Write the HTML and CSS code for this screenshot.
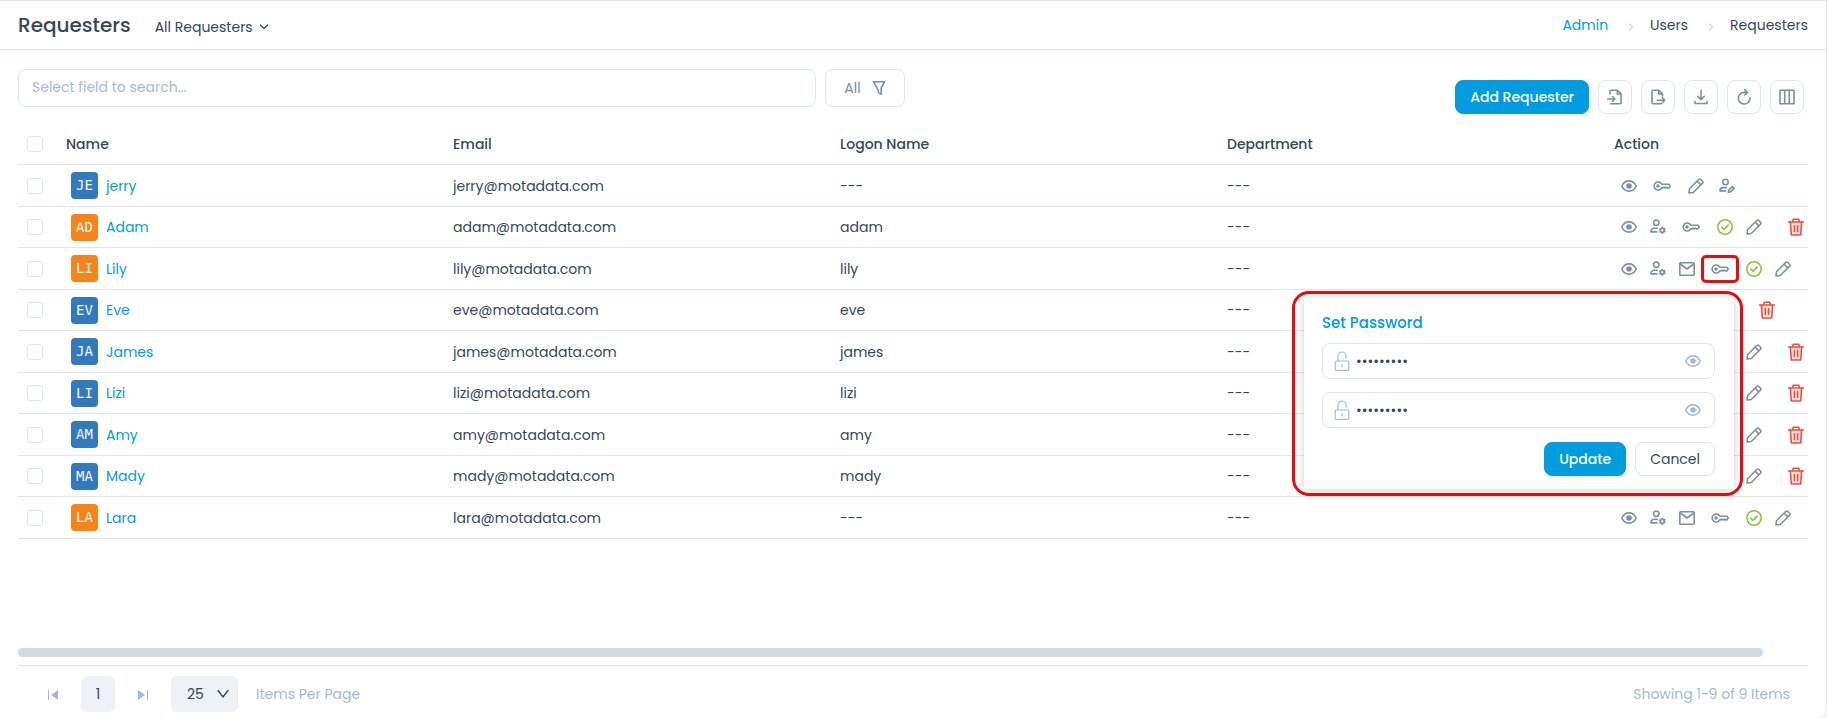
FILE: index.html
```html
<!DOCTYPE html>
<html lang="en">
<head>
    <meta charset="UTF-8">
    <meta name="viewport" content="width=device-width, initial-scale=1.0">
    <title>Requesters</title>
    <link rel="stylesheet" href="styles.css">
</head>
<body>

    <!-- icon sprite -->
    <svg class="sprite" aria-hidden="true">
        <symbol id="i-eye" viewBox="0 0 16 16"><path d="M.8 8C2.300 4.700 5 2.900 8 2.900s5.700 1.800 7.200 5.100c-1.500 3.300-4.200 5.100-7.200 5.100S2.300 11.300.8 8z"/><circle cx="8" cy="8" r="2" fill="currentColor"/></symbol>
        <symbol id="i-key" viewBox="0 0 18 16"><path d="M8.700 6.200A4 4 0 1 0 8.700 9.900H10l1-.8 1.300.9 1.300-.9 1.300.9h.9L17.200 8l-1.300-1.800z"/><circle cx="5" cy="8" r="1" fill="currentColor"/></symbol>
        <symbol id="i-pencil" viewBox="0 0 16 16"><path d="M1 15l.5-4.300L10.700 1.500a1.500 1.500 0 0 1 2.100 0l1.700 1.700a1.500 1.500 0 0 1 0 2.100L5.300 14.500zM9.200 3.200l3.700 3.700"/></symbol>
        <symbol id="i-user-edit" viewBox="0 0 16 16"><circle cx="6.500" cy="4" r="2.700"/><path d="M7.500 9.600H4.200A3.300 3.300 0 0 0 1 12.900h5.500M9.300 14.300l.4-2.200 3.500-3.500 1.800 1.800-3.500 3.500z"/></symbol>
        <symbol id="i-user-cog" viewBox="0 0 16 16"><circle cx="6.300" cy="3.700" r="2.700"/><path d="M7.300 9.300H4A3.200 3.200 0 0 0 .9 12.900h6M12.200 8.400l.9 1.300 1.600-.1-.7 1.500.9 1.400-1.600.2-.8 1.500-1-1.300-1.600.1.700-1.500-.9-1.400 1.600-.2z"/></symbol>
        <symbol id="i-mail" viewBox="0 0 16 16"><rect x=".8" y="1.800" width="14.400" height="12.400" rx=".8"/><path d="M1.200 3l6.800 5 6.800-5"/></symbol>
        <symbol id="i-check" viewBox="0 0 16 16"><circle cx="8" cy="8" r="7.200"/><path d="M4.700 8.200l2.300 2.200 4.200-4.300"/></symbol>
        <symbol id="i-trash" viewBox="0 0 16 18"><path fill="#fde3e0" d="M2.400 4l.9 13h9.400l.9-13"/><path d="M.7 4h14.600M4.700 4l.5-2.800h5.600l.5 2.800M6.400 7.500v6M9.600 7.500v6"/></symbol>
        <symbol id="i-filter" viewBox="0 0 14 16"><path d="M1.400 1.700h11.200L9.200 8v6.300L6.400 12.500V11L5 8z"/></symbol>
        <symbol id="i-import" viewBox="0 0 16 16"><path d="M3 5V2.200a1 1 0 0 1 1-1h6.500L14 4.700v9a1 1 0 0 1-1 1H3.500M10.300 1.500V5H14M.8 10h7M5.500 7.500L8 10l-2.500 2.500"/></symbol>
        <symbol id="i-export" viewBox="0 0 16 16"><path d="M11.500 14.700H3a1 1 0 0 1-1-1V2.200a1 1 0 0 1 1-1h6L12.500 4.700V7M8.800 1.500V5h3.500M7.500 11.200h7.300M12.300 8.700l2.500 2.500-2.500 2.500"/></symbol>
        <symbol id="i-download" viewBox="0 0 16 16"><path d="M8 1.200V10.500M4.800 7.400L8 10.600l3.200-3.200M2 12.500v2h12v-2"/></symbol>
        <symbol id="i-refresh" viewBox="0 0 16 16"><path d="M14 9A5.800 5.800 0 1 1 8.200 3.400h3M8.800.8l2.700 2.600L8.800 6"/></symbol>
        <symbol id="i-columns" viewBox="0 0 16 16"><path d="M1 1.200h14v13.600H1zM5.700 1.200v13.600M10.300 1.200v13.600"/></symbol>
        <symbol id="i-lock" viewBox="0 0 16 20"><rect x="1.200" y="10" width="13.600" height="9.300" rx="1"/><path d="M4 10V5a4 4 0 0 1 8 0v2.500M8 13.500v2.500"/></symbol>
        <symbol id="i-down" viewBox="0 0 10 8"><path d="M1.500 2L5 5.500 8.500 2"/></symbol>
        <symbol id="i-right" viewBox="0 0 6 8"><path d="M1.500 1L4.500 4l-3 3"/></symbol>
    </svg>

    <div class="page">
        <header class="header">
            <div class="header-left">
                <h1>Requesters</h1>
                <button class="view-btn">All Requesters <svg class="icon-down"><use href="#i-down"/></svg></button>
            </div>
            <nav class="breadcrumb" aria-label="Breadcrumb">
                <a href="#">Admin</a>
                <svg class="icon-right"><use href="#i-right"/></svg>
                <span>Users</span>
                <svg class="icon-right"><use href="#i-right"/></svg>
                <span>Requesters</span>
            </nav>
        </header>

        <main class="content">
            <div class="toolbar">
                <input class="search" type="text" aria-label="Search" placeholder="Select field to search...">
                <button class="filter-btn">All <svg class="icon-filter"><use href="#i-filter"/></svg></button>
                <div class="toolbar-actions">
                    <button class="btn btn-primary">Add Requester</button>
                    <button class="tool-btn" aria-label="Import"><svg class="icon"><use href="#i-import"/></svg></button>
                    <button class="tool-btn" aria-label="Export"><svg class="icon"><use href="#i-export"/></svg></button>
                    <button class="tool-btn" aria-label="Download"><svg class="icon"><use href="#i-download"/></svg></button>
                    <button class="tool-btn" aria-label="Refresh"><svg class="icon"><use href="#i-refresh"/></svg></button>
                    <button class="tool-btn" aria-label="Columns"><svg class="icon"><use href="#i-columns"/></svg></button>
                </div>
            </div>

            <div class="table-wrap">
                <table class="requesters">
                    <thead>
                        <tr>
                            <th class="col-check"><input type="checkbox" aria-label="Select all"></th>
                            <th>Name</th>
                            <th>Email</th>
                            <th>Logon Name</th>
                            <th>Department</th>
                            <th class="col-action">Action</th>
                        </tr>
                    </thead>
                    <tbody>
                        <tr>
                            <td class="col-check"><input type="checkbox" aria-label="Select jerry"></td>
                            <td><a class="user" href="#"><span class="avatar blue">JE</span>jerry</a></td>
                            <td>jerry@motadata.com</td>
                            <td>---</td>
                            <td>---</td>
                            <td><div class="actions">
                                <button aria-label="View"><svg class="icon"><use href="#i-eye"/></svg></button>
                                <button class="key" aria-label="Set password"><svg class="icon-key"><use href="#i-key"/></svg></button>
                                <button aria-label="Edit"><svg class="icon"><use href="#i-pencil"/></svg></button>
                                <button class="wide" aria-label="Edit user"><svg class="icon"><use href="#i-user-edit"/></svg></button>
                            </div></td>
                        </tr>
                        <tr>
                            <td class="col-check"><input type="checkbox" aria-label="Select Adam"></td>
                            <td><a class="user" href="#"><span class="avatar orange">AD</span>Adam</a></td>
                            <td>adam@motadata.com</td>
                            <td>adam</td>
                            <td>---</td>
                            <td><div class="actions">
                                <button aria-label="View"><svg class="icon"><use href="#i-eye"/></svg></button>
                                <button aria-label="Convert"><svg class="icon"><use href="#i-user-cog"/></svg></button>
                                <button class="key" aria-label="Set password"><svg class="icon-key"><use href="#i-key"/></svg></button>
                                <button class="green" aria-label="Active"><svg class="icon"><use href="#i-check"/></svg></button>
                                <button aria-label="Edit"><svg class="icon"><use href="#i-pencil"/></svg></button>
                                <button class="trash" aria-label="Delete"><svg class="icon-trash"><use href="#i-trash"/></svg></button>
                            </div></td>
                        </tr>
                        <tr>
                            <td class="col-check"><input type="checkbox" aria-label="Select Lily"></td>
                            <td><a class="user" href="#"><span class="avatar orange">LI</span>Lily</a></td>
                            <td>lily@motadata.com</td>
                            <td>lily</td>
                            <td>---</td>
                            <td><div class="actions">
                                <button aria-label="View"><svg class="icon"><use href="#i-eye"/></svg></button>
                                <button aria-label="Convert"><svg class="icon"><use href="#i-user-cog"/></svg></button>
                                <button aria-label="Send mail"><svg class="icon"><use href="#i-mail"/></svg></button>
                                <button class="key marked" aria-label="Set password"><svg class="icon-key"><use href="#i-key"/></svg></button>
                                <button class="green" aria-label="Active"><svg class="icon"><use href="#i-check"/></svg></button>
                                <button aria-label="Edit"><svg class="icon"><use href="#i-pencil"/></svg></button>
                            </div></td>
                        </tr>
                        <tr>
                            <td class="col-check"><input type="checkbox" aria-label="Select Eve"></td>
                            <td><a class="user" href="#"><span class="avatar blue">EV</span>Eve</a></td>
                            <td>eve@motadata.com</td>
                            <td>eve</td>
                            <td>---</td>
                            <td><div class="actions">
                                <button aria-label="View"><svg class="icon"><use href="#i-eye"/></svg></button>
                                <button class="key" aria-label="Set password"><svg class="icon-key"><use href="#i-key"/></svg></button>
                                <button class="green" aria-label="Active"><svg class="icon"><use href="#i-check"/></svg></button>
                                <button aria-label="Edit"><svg class="icon"><use href="#i-pencil"/></svg></button>
                                <button class="trash" aria-label="Delete"><svg class="icon-trash"><use href="#i-trash"/></svg></button>
                            </div></td>
                        </tr>
                        <tr>
                            <td class="col-check"><input type="checkbox" aria-label="Select James"></td>
                            <td><a class="user" href="#"><span class="avatar blue">JA</span>James</a></td>
                            <td>james@motadata.com</td>
                            <td>james</td>
                            <td>---</td>
                            <td><div class="actions">
                                <button aria-label="View"><svg class="icon"><use href="#i-eye"/></svg></button>
                                <button aria-label="Convert"><svg class="icon"><use href="#i-user-cog"/></svg></button>
                                <button class="key" aria-label="Set password"><svg class="icon-key"><use href="#i-key"/></svg></button>
                                <button class="green" aria-label="Active"><svg class="icon"><use href="#i-check"/></svg></button>
                                <button aria-label="Edit"><svg class="icon"><use href="#i-pencil"/></svg></button>
                                <button class="trash" aria-label="Delete"><svg class="icon-trash"><use href="#i-trash"/></svg></button>
                            </div></td>
                        </tr>
                        <tr>
                            <td class="col-check"><input type="checkbox" aria-label="Select Lizi"></td>
                            <td><a class="user" href="#"><span class="avatar blue">LI</span>Lizi</a></td>
                            <td>lizi@motadata.com</td>
                            <td>lizi</td>
                            <td>---</td>
                            <td><div class="actions">
                                <button aria-label="View"><svg class="icon"><use href="#i-eye"/></svg></button>
                                <button aria-label="Convert"><svg class="icon"><use href="#i-user-cog"/></svg></button>
                                <button class="key" aria-label="Set password"><svg class="icon-key"><use href="#i-key"/></svg></button>
                                <button class="green" aria-label="Active"><svg class="icon"><use href="#i-check"/></svg></button>
                                <button aria-label="Edit"><svg class="icon"><use href="#i-pencil"/></svg></button>
                                <button class="trash" aria-label="Delete"><svg class="icon-trash"><use href="#i-trash"/></svg></button>
                            </div></td>
                        </tr>
                        <tr>
                            <td class="col-check"><input type="checkbox" aria-label="Select Amy"></td>
                            <td><a class="user" href="#"><span class="avatar blue">AM</span>Amy</a></td>
                            <td>amy@motadata.com</td>
                            <td>amy</td>
                            <td>---</td>
                            <td><div class="actions">
                                <button aria-label="View"><svg class="icon"><use href="#i-eye"/></svg></button>
                                <button aria-label="Convert"><svg class="icon"><use href="#i-user-cog"/></svg></button>
                                <button class="key" aria-label="Set password"><svg class="icon-key"><use href="#i-key"/></svg></button>
                                <button class="green" aria-label="Active"><svg class="icon"><use href="#i-check"/></svg></button>
                                <button aria-label="Edit"><svg class="icon"><use href="#i-pencil"/></svg></button>
                                <button class="trash" aria-label="Delete"><svg class="icon-trash"><use href="#i-trash"/></svg></button>
                            </div></td>
                        </tr>
                        <tr>
                            <td class="col-check"><input type="checkbox" aria-label="Select Mady"></td>
                            <td><a class="user" href="#"><span class="avatar blue">MA</span>Mady</a></td>
                            <td>mady@motadata.com</td>
                            <td>mady</td>
                            <td>---</td>
                            <td><div class="actions">
                                <button aria-label="View"><svg class="icon"><use href="#i-eye"/></svg></button>
                                <button aria-label="Convert"><svg class="icon"><use href="#i-user-cog"/></svg></button>
                                <button class="key" aria-label="Set password"><svg class="icon-key"><use href="#i-key"/></svg></button>
                                <button class="green" aria-label="Active"><svg class="icon"><use href="#i-check"/></svg></button>
                                <button aria-label="Edit"><svg class="icon"><use href="#i-pencil"/></svg></button>
                                <button class="trash" aria-label="Delete"><svg class="icon-trash"><use href="#i-trash"/></svg></button>
                            </div></td>
                        </tr>
                        <tr>
                            <td class="col-check"><input type="checkbox" aria-label="Select Lara"></td>
                            <td><a class="user" href="#"><span class="avatar orange">LA</span>Lara</a></td>
                            <td>lara@motadata.com</td>
                            <td>---</td>
                            <td>---</td>
                            <td><div class="actions">
                                <button aria-label="View"><svg class="icon"><use href="#i-eye"/></svg></button>
                                <button aria-label="Convert"><svg class="icon"><use href="#i-user-cog"/></svg></button>
                                <button aria-label="Send mail"><svg class="icon"><use href="#i-mail"/></svg></button>
                                <button class="key" aria-label="Set password"><svg class="icon-key"><use href="#i-key"/></svg></button>
                                <button class="green" aria-label="Active"><svg class="icon"><use href="#i-check"/></svg></button>
                                <button aria-label="Edit"><svg class="icon"><use href="#i-pencil"/></svg></button>
                            </div></td>
                        </tr>
                    </tbody>
                </table>

                <!-- set password popover -->
                <div class="popover-frame">
                    <form class="popover">
                        <h2>Set Password</h2>
                        <div class="password-box">
                            <svg class="icon-lock"><use href="#i-lock"/></svg>
                            <input type="password" aria-label="Password" value="motadata1">
                            <button type="button" aria-label="Show password"><svg class="icon"><use href="#i-eye"/></svg></button>
                        </div>
                        <div class="password-box">
                            <svg class="icon-lock"><use href="#i-lock"/></svg>
                            <input type="password" aria-label="Confirm password" value="motadata1">
                            <button type="button" aria-label="Show confirm password"><svg class="icon"><use href="#i-eye"/></svg></button>
                        </div>
                        <div class="popover-buttons">
                            <button type="button" class="btn btn-primary">Update</button>
                            <button type="button" class="btn">Cancel</button>
                        </div>
                    </form>
                </div>
            </div>

            <div class="scrollbar"><div class="scroll-thumb"></div></div>

            <footer class="pager">
                <button class="page-nav" aria-label="First page"><svg class="icon-page" viewBox="0 0 10 10"><path d="M0 0h1v10H0zM10 0v10L3 5z"/></svg></button>
                <button class="page-num">1</button>
                <button class="page-nav" aria-label="Last page"><svg class="icon-page" viewBox="0 0 10 10"><path d="M9 0h1v10H9zM0 0v10l7-5z"/></svg></button>
                <div class="page-size">
                    <select id="pageSize">
                        <option>25</option>
                        <option>50</option>
                        <option>100</option>
                    </select>
                    <svg class="icon-select" viewBox="0 0 12 10"><path d="M1 1.500l5 6.500 5-6.500"/></svg>
                </div>
                <label for="pageSize">Items Per Page</label>
                <span class="showing">Showing 1-9 of 9 Items</span>
            </footer>
        </main>
    </div>

</body>
</html>
```

FILE: styles.css
```css
* {
    box-sizing: border-box;
}
body {
    margin: 0;
    background: #f4f5f7;
    font-family: Poppins, Inter, sans-serif;
    font-size: 14px;
    line-height: 20px;
    color: #364658;
}
button, input, select {
    font: inherit;
    color: inherit;
}
button {
    padding: 0;
    border: none;
    background: none;
    cursor: pointer;
}
a {
    color: #009cde;
    text-decoration: none;
}
svg {
    display: block;
    fill: none;
    stroke: currentColor;
    stroke-width: 1.6;
    stroke-linecap: round;
    stroke-linejoin: round;
    flex: none;
}
.sprite {
    position: absolute;
    width: 0;
    height: 0;
}
.icon {
    width: 16px;
    height: 16px;
}
.icon-key {
    width: 18px;
    height: 16px;
}
.icon-trash {
    width: 16px;
    height: 18px;
}
.icon-filter {
    width: 14px;
    height: 16px;
}
.icon-down {
    width: 10px;
    height: 8px;
    stroke-width: 1.3;
}
.icon-right {
    width: 6px;
    height: 8px;
    margin: 4px 0 0 4px;
    color: #a5bad0;
    stroke-width: 1;
}
.icon-lock {
    width: 16px;
    height: 20px;
    stroke-width: 1.2;
}
.page {
    min-height: 100vh;
    display: flex;
    flex-direction: column;
    background: white;
    border: 1px solid #e2e4e8;
    border-width: 1px 1px 0 0;
    border-bottom-right-radius: 10px;
}

/* header */
.header {
    display: flex;
    justify-content: space-between;
    align-items: center;
    padding: 0 18px;
    height: 49px;
    border-bottom: 1px solid #dee5ed;
}
.header-left {
    display: flex;
    align-items: center;
    gap: 24px;
}
h1 {
    margin: 0;
    font-size: 20px;
    font-weight: 500;
    line-height: 28px;
}
.view-btn {
    display: flex;
    align-items: center;
    gap: 6px;
    padding-top: 4px;
}
.breadcrumb {
    display: flex;
    align-items: center;
    gap: 16px;
}

/* search and buttons */
.content {
    flex: 1;
    display: flex;
    flex-direction: column;
    padding: 19px 18px 6px;
}
.toolbar {
    display: flex;
    align-items: flex-start;
    gap: 9px;
}
.search {
    width: 44.6%;
    height: 38px;
    padding: 0 13px 2px;
    border: 1px solid #dee5ed;
    border-radius: 8px;
    background: white;
}
.search::placeholder {
    color: #a5bad0;
}
.filter-btn {
    display: flex;
    align-items: center;
    gap: 11px;
    height: 38px;
    padding: 0 18px;
    border: 1px solid #dee5ed;
    border-radius: 8px;
    color: #7b8fa5;
}
.toolbar-actions {
    display: flex;
    gap: 9px;
    margin-left: auto;
    padding: 11px 4px 0 0;
}
.btn {
    height: 34px;
    padding: 0 14px;
    border: 1px solid #dee5ed;
    border-radius: 8px;
}
.btn-primary {
    border-color: #009cde;
    background: #009cde;
    color: white;
    font-weight: 500;
}
.tool-btn {
    display: flex;
    align-items: center;
    justify-content: center;
    width: 34px;
    height: 34px;
    border: 1px solid #dee5ed;
    border-radius: 8px;
    color: #7b8fa5;
}

/* table */
.table-wrap {
    position: relative;
    margin-top: 9px;
}
.requesters {
    width: 100%;
    table-layout: fixed;
    border-collapse: separate;
    border-spacing: 0;
}
.requesters th, .requesters td {
    height: 42px;
    padding: 0 0 0 12px;
    border-bottom: 1px solid #dee5ed;
    text-align: left;
}
.requesters tbody tr:nth-child(even) td {
    height: 41px;
}
.requesters th {
    font-weight: 500;
}
.requesters .col-check {
    width: 36px;
    padding-left: 9px;
}
.requesters .col-action {
    width: 206px;
}
input[type="checkbox"] {
    appearance: none;
    display: block;
    width: 16px;
    height: 16px;
    margin: 0;
    border: 1px solid #dee5ed;
    border-radius: 3px;
    background: white;
}
.user {
    display: flex;
    align-items: center;
    gap: 8px;
    padding-left: 5px;
}
.avatar {
    width: 27px;
    height: 27px;
    border-radius: 4px;
    color: #f2f6fa;
    font-family: "DejaVu Sans Mono", monospace;
    font-size: 14px;
    line-height: 27px;
    text-align: center;
}
.blue {
    background: #3279be;
}
.orange {
    background: #f58518;
}
.actions {
    display: flex;
    align-items: center;
    color: #7b8fa5;
}
.actions button {
    display: flex;
    align-items: center;
    justify-content: center;
    flex: none;
    width: 29px;
    height: 28px;
}
.actions .key {
    width: 38px;
}
.actions .wide {
    width: 34px;
}
.actions .green {
    color: #89c540;
}
.actions .trash {
    margin-left: 13px;
    color: #f04e3e;
}
.marked {
    border: 3px solid #ea0b0b;
    border-radius: 5px;
}

/* popover */
.popover-frame {
    position: absolute;
    top: 168px;
    right: 65px;
    width: 451px;
    padding: 4px 6px 4px 9px;
    border: 3px solid #ea0b0b;
    border-radius: 17px;
}
.popover {
    display: flex;
    flex-direction: column;
    padding: 15px 19px 13px 18px;
    border-radius: 4px;
    background: white;
    box-shadow: 0 1px 8px rgba(0, 0, 0, 0.2);
}
h2 {
    margin: 0 0 10px;
    color: #009cde;
    font-size: 15px;
    font-weight: 500;
    line-height: 20px;
}
.password-box {
    display: flex;
    align-items: center;
    gap: 6px;
    height: 36px;
    margin-bottom: 13px;
    padding: 0 13px 0 11px;
    border: 1px solid #dee5ed;
    border-radius: 8px;
    color: #a5bad0;
}
.password-box input {
    flex: 1;
    min-width: 0;
    padding: 0;
    border: none;
    outline: none;
    background: none;
    color: #364658;
}
.popover-buttons {
    display: flex;
    justify-content: flex-end;
    gap: 9px;
    padding-top: 1px;
}

/* scrollbar and pager */
.scrollbar {
    margin-top: auto;
    padding-bottom: 8px;
    border-bottom: 1px solid #dee5ed;
}
.scroll-thumb {
    width: 97.5%;
    height: 9px;
    border-radius: 5px;
    background: #d1dbe5;
}
.pager {
    display: flex;
    align-items: center;
    padding: 10px 18px 0 30px;
    color: #a5bad0;
}
.page-nav {
    height: 36px;
    padding-top: 2px;
}
.icon-page {
    width: 10px;
    height: 10px;
    fill: currentColor;
    stroke-width: 0;
}
.page-num {
    width: 34px;
    height: 36px;
    margin: 0 23px;
    border-radius: 6px;
    background: #eef1f6;
    color: #364658;
}
.page-size {
    display: grid;
    align-items: center;
    justify-items: end;
    width: 67px;
    margin: 0 18px 0 23px;
    color: #364658;
}
.page-size select, .icon-select {
    grid-area: 1 / 1;
}
.page-size select {
    appearance: none;
    width: 100%;
    height: 36px;
    padding: 0 16px;
    border: none;
    border-radius: 6px;
    background: #eef1f6;
}
.icon-select {
    width: 12px;
    height: 10px;
    margin-right: 9px;
    stroke-width: 1.3;
    pointer-events: none;
}
.showing {
    margin-left: auto;
}
```
